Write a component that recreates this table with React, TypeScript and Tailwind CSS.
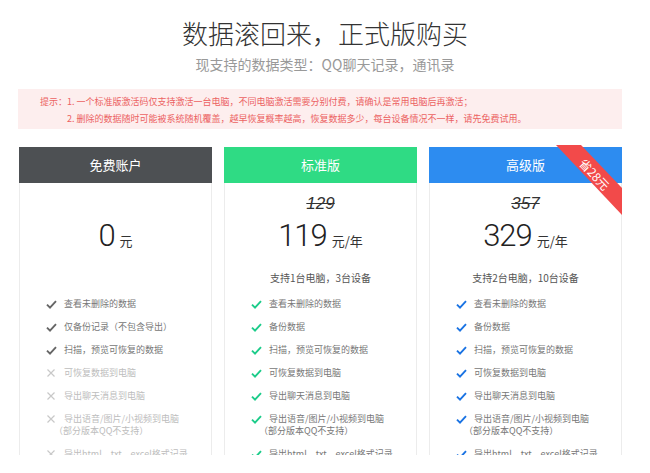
import React from 'react';

type Feature = { text: string; sub?: string; on: boolean };

interface Plan {
  name: string;
  head: string;
  tick: string;
  old?: string;
  price: string;
  unit: string;
  support?: string;
  ribbon?: string;
  features: Feature[];
}

const all = [
  '查看未删除的数据',
  '备份数据',
  '扫描，预览可恢复的数据',
  '可恢复数据到电脑',
  '导出聊天消息到电脑',
  '导出语音/图片/小视频到电脑',
  '导出html、txt、excel格式记录',
];

const plans: Plan[] = [
  {
    name: '免费账户',
    head: 'bg-[#4d5053]',
    tick: 'text-[#666]',
    price: '0',
    unit: '元',
    features: [
      { text: '查看未删除的数据', on: true },
      { text: '仅备份记录（不包含导出）', on: true },
      { text: '扫描，预览可恢复的数据', on: true },
      { text: '可恢复数据到电脑', on: false },
      { text: '导出聊天消息到电脑', on: false },
      { text: '导出语音/图片/小视频到电脑', sub: '（部分版本QQ不支持）', on: false },
      { text: '导出html、txt、excel格式记录', on: false },
    ],
  },
  {
    name: '标准版',
    head: 'bg-[#2fdb84]',
    tick: 'text-[#1ccc8a]',
    old: '129',
    price: '119',
    unit: '元/年',
    support: '支持1台电脑，3台设备',
    features: all.map((t, i) => ({ text: t, on: true, sub: i === 5 ? '（部分版本QQ不支持）' : undefined })),
  },
  {
    name: '高级版',
    head: 'bg-[#2d8cf0]',
    tick: 'text-[#1a73e3]',
    old: '357',
    price: '329',
    unit: '元/年',
    support: '支持2台电脑，10台设备',
    ribbon: '省28元',
    features: all.map((t, i) => ({ text: t, on: true, sub: i === 5 ? '（部分版本QQ不支持）' : undefined })),
  },
];

function Check({ className }: { className: string }) {
  return (
    <svg width="11" height="9" viewBox="0 0 11 9" className={className}>
      <path d="M1 4.6 L4 7.6 L10 1.2" fill="none" stroke="currentColor" strokeWidth="1.9" />
    </svg>
  );
}

function Cross() {
  return (
    <svg width="10" height="10" viewBox="0 0 10 10" className="text-[#c8c8c8]">
      <path d="M1.5 1.5 L8.5 8.5 M8.5 1.5 L1.5 8.5" fill="none" stroke="currentColor" strokeWidth="1.2" />
    </svg>
  );
}

function PlanCard({ plan }: { plan: Plan }) {
  return (
    <div className="relative">
      <div className={`${plan.head} h-[36px] flex items-center justify-center text-[13px] text-white`}>
        {plan.name}
      </div>
      {plan.ribbon && (
        <svg width="66" height="70" viewBox="0 0 66 70" className="absolute right-0 top-[-2px]">
          <polygon points="0,0 25,0 66,43 66,70" fill="#f24a4a" />
          <text
            x="39"
            y="29"
            fill="#fff"
            fontSize="12"
            textAnchor="middle"
            dominantBaseline="central"
            transform="rotate(47 39 29)"
            fontFamily="'Noto Sans CJK SC', sans-serif"
          >
            {plan.ribbon}
          </text>
        </svg>
      )}
      <div className="h-[400px] border-x border-[#ececec] pt-[11px]">
        <div className="flex flex-col items-center">
          <div
            className={`h-[20px] leading-[20px] text-[17px] italic line-through text-[#333] font-['Liberation_Sans',sans-serif] ${plan.old ? '' : 'invisible'}`}
          >
            {plan.old ?? '0'}
          </div>
          <div className="mt-[4px] flex items-baseline text-[#222]">
            <span className="text-[31px] leading-[36px] font-light tracking-[-1px] font-['Roboto',sans-serif]">
              {plan.price}
            </span>
            <span className="ml-[5px] text-[13px] text-[#333]">{plan.unit}</span>
          </div>
          <div className={`mt-[16px] h-[16px] leading-[16px] text-[10px] text-[#555] ${plan.support ? '' : 'invisible'}`}>
            {plan.support ?? '-'}
          </div>
        </div>
        <ul className="mt-[12px] pl-[26px] flex flex-col gap-[11px] text-[9px] leading-[12px]">
          {plan.features.map((f) => (
            <li key={f.text} className="flex">
              <span className="w-[18px] h-[12px] flex items-center shrink-0">
                {f.on ? <Check className={plan.tick} /> : <Cross />}
              </span>
              <div className={f.on ? 'text-[#777]' : 'text-[#bdbdbd]'}>
                <div className="whitespace-nowrap">{f.text}</div>
                {f.sub && <div className="-ml-[10px] whitespace-nowrap">{f.sub}</div>}
              </div>
            </li>
          ))}
        </ul>
      </div>
    </div>
  );
}

export default function App() {
  return (
    <div className="w-[650px] h-[473px] bg-white font-['Noto_Sans_CJK_SC',sans-serif]">
      <div className="h-[455px] overflow-hidden">
        <h1 className="pt-[19px] text-center text-[26px] leading-[28px] font-light text-[#333]">
          数据滚回来，正式版购买
        </h1>
        <p className="mt-[8px] text-center text-[14px] leading-[18px] text-[#999]">
          现支持的数据类型：QQ聊天记录，通讯录
        </p>
        <div className="ml-[18px] w-[604px] mt-[16px] bg-[#fdeeee] pl-[22px] pt-[4px] pb-[2px] flex text-[9px] leading-[17px] text-[#ec6262]">
          <span className="shrink-0">提示：</span>
          <div>
            <p>1. 一个标准版激活码仅支持激活一台电脑，不同电脑激活需要分别付费，请确认是常用电脑后再激活；</p>
            <p>2. 删除的数据随时可能被系统随机覆盖，越早恢复概率越高，恢复数据多少，每台设备情况不一样，请先免费试用。</p>
          </div>
        </div>
        <div className="ml-[19px] w-[603px] mt-[18px] grid grid-cols-3 gap-[12px]">
          {plans.map((p) => (
            <PlanCard key={p.name} plan={p} />
          ))}
        </div>
      </div>
    </div>
  );
}
